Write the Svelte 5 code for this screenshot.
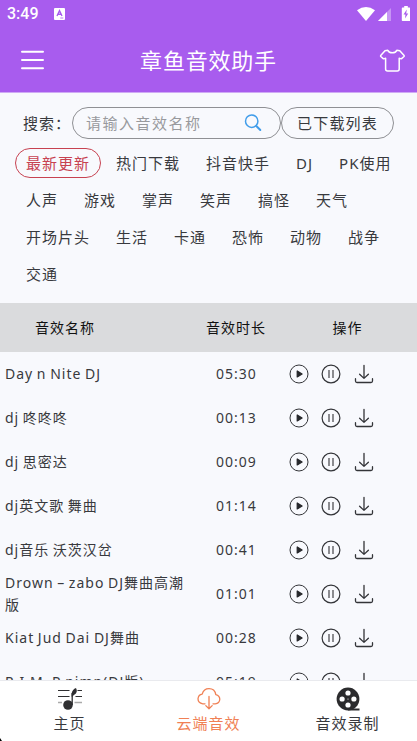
<script lang="ts">
    let keyword = $state("");
    let activeTag = $state("最新更新");
    let activeNav = $state("cloud");

    const tags = [
        "最新更新", "热门下载", "抖音快手", "DJ", "PK使用",
        "人声", "游戏", "掌声", "笑声", "搞怪", "天气",
        "开场片头", "生活", "卡通", "恐怖", "动物", "战争",
        "交通",
    ];

    const sounds = [
        { name: "Day n Nite DJ", time: "05:30" },
        { name: "dj 咚咚咚", time: "00:13" },
        { name: "dj 思密达", time: "00:09" },
        { name: "dj英文歌 舞曲", time: "01:14" },
        { name: "dj音乐 沃茨汉岔", time: "00:41" },
        { name: "Drown – zabo DJ舞曲高潮版", time: "01:01" },
        { name: "Kiat Jud Dai DJ舞曲", time: "00:28" },
        { name: "R.I.M. P pimp(DJ版)", time: "05:19" },
    ];

    const navs = [
        { id: "home", label: "主页" },
        { id: "cloud", label: "云端音效" },
        { id: "record", label: "音效录制" },
    ];
</script>

<div class="app">
    <div class="status">
        <span class="clock">3:49</span>
        <svg class="ime" width="11" height="12" viewBox="0 0 11 12">
            <rect width="11" height="12" rx="1" fill="#fff" />
            <path d="M3 8 5.5 2.6 8 8M4 6.3h3" fill="none" stroke="#a85cee" stroke-width="1.4" />
            <path d="M6.3 10h3" stroke="#a85cee" stroke-width=".8" />
        </svg>
        <svg class="signals" width="53" height="16" viewBox="0 0 53 16">
            <path d="M0 4.2Q9 -2.2 18 4.2L9 15Z" fill="#fff" />
            <path d="M34 2v13H21Z" fill="#fff" opacity=".35" />
            <path d="M30 6v9h-9Z" fill="#fff" />
            <path d="M45.5 1.5h1.7V0h3.6v1.5h1.7q.7 0 .7.8v12q0 .8-.7.8h-7q-.7 0-.7-.8v-12q0-.8.7-.8Z" fill="#fff" />
            <path d="m49.8 3.6-3.3 4.8h2l-.5 4.1 3.2-5h-2Z" fill="#a85cee" />
        </svg>
    </div>

    <header class="topbar">
        <button class="plain" aria-label="菜单">
            <svg width="24" height="20" viewBox="0 0 24 20">
                <path d="M2 1.8h21M2 10h21M2 18.2h21" stroke="#fff" stroke-width="2" stroke-linecap="round" />
            </svg>
        </button>
        <h1>章鱼音效助手</h1>
        <button class="plain" aria-label="皮肤">
            <svg width="26" height="24" viewBox="0 0 26 24">
                <path
                    d="M8.8 2.3C10.4 5.6 16.2 5.6 17.8 2.3L20.8 2.8 25.1 7.6Q25.4 8.1 25 8.5L22.6 10.6Q22.1 10.9 21.5 10.6L20.2 10.2V21Q20.2 23 18.2 23H8.6Q6.6 23 6.6 21V10.2L5.4 10.6Q4.7 10.9 4.2 10.6L1.8 8.5Q1.4 8.1 1.7 7.6L6 2.8Z"
                    fill="none" stroke="#fff" stroke-width="1.5" stroke-linejoin="round" />
            </svg>
        </button>
    </header>

    <div class="search">
        <span class="label">搜索：</span>
        <div class="field">
            <input type="text" placeholder="请输入音效名称" bind:value={keyword} />
            <svg width="18" height="18" viewBox="0 0 18 18" fill="none" stroke="#419dea">
                <circle cx="7.7" cy="7.2" r="6.2" stroke-width="1.5" />
                <path d="m12.3 12 4 4" stroke-width="2" stroke-linecap="round" />
            </svg>
        </div>
        <button class="downloaded">已下载列表</button>
    </div>

    <div class="tags">
        {#each tags as tag}
            <button class="tag" class:active={activeTag === tag} onclick={() => (activeTag = tag)}>{tag}</button>
        {/each}
    </div>

    <div class="thead">
        <span>音效名称</span>
        <span>音效时长</span>
        <span>操作</span>
    </div>

    <div class="list">
        {#each sounds as sound}
            <div class="row">
                <div class="name">{sound.name}</div>
                <div class="time">{sound.time}</div>
                <div class="actions">
                    <svg width="20" height="20" viewBox="0 0 20 20">
                        <circle cx="10" cy="10" r="9" fill="none" stroke="#333438" stroke-width="1" />
                        <path d="M8.2 7v6l4.9-3Z" fill="#26272b" stroke="#26272b" stroke-width="1.2" stroke-linejoin="round" />
                    </svg>
                    <svg width="20" height="20" viewBox="0 0 20 20" fill="none" stroke="#333438">
                        <circle cx="10" cy="10" r="8.9" stroke-width="1.2" />
                        <path d="M8 6v8M12 6v8" stroke-width="1.1" />
                    </svg>
                    <svg width="20" height="20" viewBox="0 0 20 20" fill="none" stroke="#333438" stroke-width="1.3" stroke-linecap="round" stroke-linejoin="round">
                        <path d="M10 1.3v13M5.6 10.2l4.4 4.2 4.4-4.2" />
                        <path d="M1.5 14.7V17q0 1.5 1.5 1.5h14q1.5 0 1.5-1.5v-2.3" />
                    </svg>
                </div>
            </div>
        {/each}
    </div>

    <nav>
        {#each navs as nav}
            <button class="nav-item" class:active={activeNav === nav.id} onclick={() => (activeNav = nav.id)}>
                {#if nav.id === "home"}
                    <svg width="26" height="24" viewBox="0 0 26 24">
                        <path d="M1 3.5h11.5M1 9.5h11.5M20.5 3.5H25M18.5 9.5H25" stroke="#2f2f31" stroke-width="1.2" />
                        <path d="M1 15.5h4M17.5 15.5H25" stroke="#aaa" stroke-width="1.4" />
                        <circle cx="11" cy="18" r="4.8" fill="#2f2f31" />
                        <path d="M15.2 18V6" stroke="#2f2f31" stroke-width="1.3" />
                        <path d="M14.6 9.5V6.5Q15.5 2.2 19 1Q21.3 5.3 17.3 7.8Q16 8.5 15.2 10Z" fill="#2f2f31" />
                    </svg>
                {:else if nav.id === "cloud"}
                    <svg width="26" height="24" viewBox="0 0 26 24" fill="none" stroke="currentColor" stroke-width="1.3" stroke-linecap="round" stroke-linejoin="round">
                        <path d="M9 16.8H6.8Q2 16 2 11.8Q2.4 7.7 6.2 7.2C7.2 3.6 9.7 1.7 13 1.7C16.8 1.7 19.2 4.2 19.8 7.6Q23.8 8.7 23.8 12.3Q23.5 16.6 19.2 16.8H17" />
                        <path d="M13 9.5v12.3M9.8 18.6 13 21.8l3.2-3.2" />
                    </svg>
                {:else}
                    <svg width="26" height="24" viewBox="0 0 26 24">
                        <circle cx="13" cy="12" r="11.4" fill="#2b2b2d" />
                        <path d="M13 21.5h11.5v2H13Z" fill="#2b2b2d" />
                        <g fill="#fff">
                            <circle cx="13" cy="6" r="2.6" />
                            <circle cx="7.1" cy="12" r="2.6" />
                            <circle cx="18.9" cy="12" r="2.6" />
                            <circle cx="13" cy="18" r="2.6" />
                            <circle cx="13" cy="12" r=".6" />
                        </g>
                    </svg>
                {/if}
                <span>{nav.label}</span>
            </button>
        {/each}
        <svg class="corner" width="2" height="3" viewBox="0 0 2 3"><path d="M0 0 2 3H0Z" /></svg>
    </nav>
</div>

<style>
    :global(body) {
        margin: 0;
        overflow: hidden;
    }

    .app {
        display: flex;
        flex-direction: column;
        height: 741px;
        overflow: hidden;
        background: #f8f9fd;
        color: #38393d;
        font-family: "Noto Sans", "Noto Sans CJK SC", sans-serif;
        letter-spacing: 1px;
    }

    svg {
        display: block;
        flex: none;
    }

    button {
        font: inherit;
        letter-spacing: inherit;
        color: inherit;
        background: none;
        border: 0;
        padding: 0;
        margin: 0;
    }

    .status {
        flex: none;
        display: flex;
        align-items: center;
        height: 28px;
        padding: 0 7px;
        background: #a85cee;
    }

    .clock {
        width: 47px;
        font: 500 16px/28px Roboto, sans-serif;
        letter-spacing: 0;
        color: #fff;
    }

    .signals {
        margin-left: auto;
    }

    .topbar {
        flex: none;
        display: flex;
        align-items: center;
        justify-content: space-between;
        height: 64px;
        padding: 1px 12px 0 20px;
        box-sizing: border-box;
        background: #a85cee;
        border-bottom: 1px solid #a85cee;
        box-shadow: 0 1px 0 #cfaaf5;
    }

    h1 {
        margin: 0 6px 0 0;
        font-size: 22px;
        font-weight: 400;
        line-height: 32px;
        letter-spacing: 0.8px;
        color: #fff;
    }

    .search {
        flex: none;
        display: flex;
        align-items: center;
        height: 32px;
        margin-top: 15px;
        padding-left: 23px;
        font-size: 15px;
    }

    .label {
        width: 49px;
        padding-bottom: 2px;
        white-space: nowrap;
    }

    .field {
        display: flex;
        align-items: center;
        box-sizing: border-box;
        width: 209px;
        height: 32px;
        padding: 0 18px 0 13px;
        border: 1px solid #8f9094;
        border-radius: 16px;
    }

    input {
        flex: 1;
        min-width: 0;
        padding: 0;
        border: 0;
        outline: none;
        background: none;
        font: inherit;
        letter-spacing: 1.5px;
        color: inherit;
    }

    input::placeholder {
        color: #98999d;
    }

    .downloaded {
        width: 113px;
        height: 32px;
        padding-bottom: 2px;
        box-sizing: border-box;
        border: 1px solid #8f9094;
        border-radius: 16px;
        letter-spacing: 1.2px;
        white-space: nowrap;
    }

    .tags {
        flex: none;
        display: flex;
        flex-wrap: wrap;
        align-content: flex-start;
        gap: 7px 4px;
        height: 155px;
        margin-top: 9px;
        padding-left: 15px;
    }

    .tag {
        height: 30px;
        padding: 0 10px;
        box-sizing: border-box;
        border: 1px solid transparent;
        border-radius: 15px;
        font-size: 15px;
        line-height: 28px;
    }

    .tag.active {
        color: #c74251;
        border-color: #c74251;
    }

    .thead {
        flex: none;
        display: grid;
        grid-template-columns: 130px 212px 1fr;
        align-items: center;
        height: 48px;
        padding: 0 32px 1px 0;
        background: #dadbdd;
        color: #111;
        font-size: 14px;
        text-align: center;
    }

    .thead span:last-child {
        margin-left: -32px;
    }

    .list {
        flex: 1;
        min-height: 0;
        overflow: hidden;
        font-size: 14px;
        line-height: 22px;
    }

    .row {
        display: grid;
        grid-template-columns: 185px 93px 1fr;
        align-items: center;
        height: 44px;
        padding-left: 5px;
    }

    .name {
        word-spacing: -1px;
    }

    .time {
        text-align: center;
    }

    .actions {
        display: flex;
        gap: 12.5px;
        padding-left: 5.5px;
    }

    nav {
        position: relative;
        flex: none;
        display: grid;
        grid-template-columns: repeat(3, 1fr);
        height: 61px;
        box-sizing: border-box;
        border-top: 1px solid #e9eaee;
        background: #fff;
    }

    .nav-item {
        display: flex;
        flex-direction: column;
        align-items: center;
        padding-top: 6px;
        font-size: 15px;
        line-height: 22px;
    }

    .nav-item span {
        margin-top: 1px;
    }

    .nav-item.active {
        color: #f08054;
    }

    .corner {
        position: absolute;
        left: 0;
        bottom: 0;
    }
</style>
